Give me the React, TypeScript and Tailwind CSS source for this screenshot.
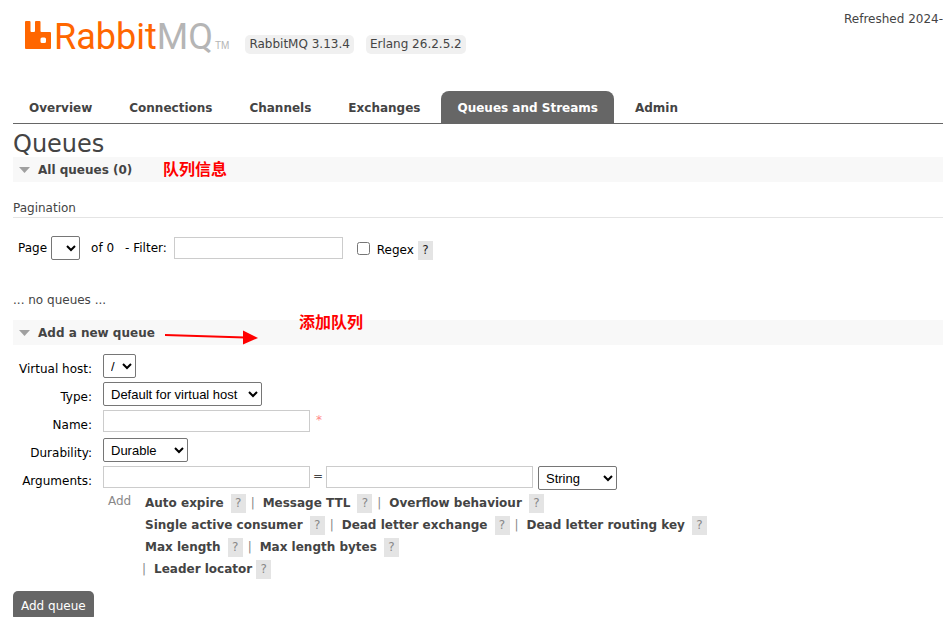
import type { ReactNode } from "react";

const tabs = ["Overview", "Connections", "Channels", "Exchanges", "Queues and Streams", "Admin"];

const argumentRows = [
  ["Auto expire", "Message TTL", "Overflow behaviour"],
  ["Single active consumer", "Dead letter exchange", "Dead letter routing key"],
  ["Max length", "Max length bytes"],
];

const selectStyle =
  "h-6 rounded-[2px] border border-[#767676] bg-white px-[3px] font-['Liberation_Sans',sans-serif] text-[13px] text-black";
const inputStyle = "h-[22px] border border-[#ccc] bg-white px-1";

function Logo() {
  return (
    <a href="#" aria-label="RabbitMQ home" className="flex items-baseline">
      <svg width="27" height="28" viewBox="0 0 27 28" aria-hidden="true">
        <path
          fill="#f60"
          fillRule="evenodd"
          d="M1 0H4.500Q5.500 0 5.500 1V10Q5.500 11 6.500 11H9Q10 11 10 10V1Q10 0 11 0H14.500Q15.500 0 15.500 1V10Q15.500 11 16.500 11H25Q26 11 26 12V27Q26 28 25 28H1Q0 28 0 27V1Q0 0 1 0ZM17 16.500Q15.500 16.500 15.500 18V20.500Q15.500 22 17 22H19.500Q21 22 21 20.500V18Q21 16.500 19.500 16.500Z"
        />
      </svg>
      <span className="ml-[2px] font-['Roboto','Liberation_Sans',sans-serif] text-[36px] leading-[38px] text-[#f60]">
        Rabbit<span className="text-[#b5b5b5]">MQ</span>
      </span>
      <span className="ml-[2px] font-['Liberation_Sans',sans-serif] text-[10px] leading-4 text-[#b5b5b5]">TM</span>
    </a>
  );
}

function SectionBar({ children }: { children: ReactNode }) {
  return (
    <h2 className="bg-[#f8f8f8] font-bold">
      <button type="button" className="flex h-[25px] w-full items-center pl-[6px] text-left">
        <svg width="11" height="6" viewBox="0 0 11 6" className="mr-2" aria-hidden="true">
          <path d="M0 0h11L5.500 6Z" fill="#a0a0a0" />
        </svg>
        {children}
      </button>
    </h2>
  );
}

function Help({ dark = false }: { dark?: boolean }) {
  return (
    <button
      type="button"
      aria-label="Help"
      className={`h-[19px] w-[15px] shrink-0 bg-[#e4e4e4] text-center text-[12px] leading-[19px] ${dark ? "text-[#222]" : "text-[#888]"}`}
    >
      ?
    </button>
  );
}

function FormRow({ id, label, children }: { id: string; label: string; children: ReactNode }) {
  return (
    <div className="flex h-6 items-start">
      <label htmlFor={id} className="mr-[11px] w-[79px] shrink-0 pt-[7px] text-right leading-4 text-black">
        {label}
      </label>
      {children}
    </div>
  );
}

export default function App() {
  return (
    <div className="relative overflow-hidden bg-white font-['DejaVu_Sans',Verdana,sans-serif] text-[12px] leading-4 text-[#444]">
      <header className="flex h-[54px] justify-between pl-[25px]">
        <div className="flex pt-[18px]">
          <Logo />
          <ul className="ml-4 flex gap-3 pt-[17px]">
            <li className="h-[19px] rounded-[5px] bg-[#f0f0f0] px-1 leading-[19px]">RabbitMQ 3.13.4</li>
            <li className="h-[19px] rounded-[5px] bg-[#f0f0f0] px-1 leading-[19px]">Erlang 26.2.5.2</li>
          </ul>
        </div>
        <p className="whitespace-nowrap pt-[11px]">Refreshed 2024-</p>
      </header>

      <main className="pl-[13px]">
        <nav className="mt-[37px] flex gap-[5px] border-b border-[#666] font-bold">
          {tabs.map((tab) => (
            <a
              key={tab}
              href="#"
              className={`h-8 whitespace-nowrap rounded-t-lg px-4 leading-[34px] ${tab === "Queues and Streams" ? "bg-[#666] text-white" : ""}`}
            >
              {tab}
            </a>
          ))}
        </nav>

        <h1 className="pt-[7px] text-[24px] leading-[26px]">Queues</h1>
        <SectionBar>All queues (0)</SectionBar>

        <h3 className="mt-[18px] border-b border-[#e4e4e4] pb-[1px]">Pagination</h3>
        <div className="mt-[18px] flex h-6 items-center pl-[5px] text-black">
          <label htmlFor="page">Page</label>
          <select id="page" className={`${selectStyle} ml-1 w-[29px]`} />
          <span className="ml-[11px]">of 0</span>
          <label htmlFor="filter" className="ml-[11px]">- Filter:</label>
          <input id="filter" type="text" className={`${inputStyle} ml-[7px] w-[169px]`} />
          <input id="regex" type="checkbox" className="ml-[14px] size-[13px]" />
          <label htmlFor="regex" className="ml-[7px] mr-1 pt-1">Regex</label>
          <div className="flex pt-1"><Help dark /></div>
        </div>

        <p className="mb-3 mt-8">... no queues ...</p>
        <SectionBar>Add a new queue</SectionBar>

        <form className="pt-[9px]">
          <div className="grid gap-1">
            <FormRow id="vhost" label="Virtual host:">
              <select id="vhost" className={`${selectStyle} w-[33px]`}>
                <option>/</option>
              </select>
            </FormRow>
            <FormRow id="type" label="Type:">
              <select id="type" className={`${selectStyle} w-[159px]`}>
                <option>Default for virtual host</option>
              </select>
            </FormRow>
            <FormRow id="name" label="Name:">
              <input id="name" type="text" className={`${inputStyle} w-[207px]`} />
              <span className="ml-[6px] pt-[2px] text-[#f88]">*</span>
            </FormRow>
            <FormRow id="durability" label="Durability:">
              <select id="durability" className={`${selectStyle} w-[85px]`}>
                <option>Durable</option>
              </select>
            </FormRow>
            <FormRow id="argument" label="Arguments:">
              <input id="argument" type="text" className={`${inputStyle} w-[207px]`} />
              <span className="w-4 pt-[2px] text-center">=</span>
              <input type="text" aria-label="Argument value" className={`${inputStyle} w-[207px]`} />
              <select aria-label="Argument type" className={`${selectStyle} ml-[5px] w-[79px]`}>
                <option>String</option>
              </select>
            </FormRow>
          </div>
          <div className="mt-[2px] flex pl-[95px] text-[#888]">
            <span className="w-[34px] shrink-0 pt-[1px]">Add</span>
            <div>
              {argumentRows.map((row) => (
                <div key={row[0]} className="flex h-[22px] items-center whitespace-nowrap pl-[3px]">
                  {row.map((name, index) => (
                    <span key={name} className="flex items-center">
                      {index > 0 && <span className="ml-[5px] mr-1 w-2">|</span>}
                      <button type="button" className="mr-[7px] font-bold text-[#444]">{name}</button>
                      <Help />
                    </span>
                  ))}
                </div>
              ))}
              <div className="flex h-[22px] items-center whitespace-nowrap">
                <span className="mr-2">|</span>
                <button type="button" className="mr-1 font-bold text-[#444]">Leader locator</button>
                <Help />
              </div>
            </div>
          </div>
          <button type="submit" className="mt-[11px] h-[30px] rounded-[5px] bg-[#666] px-2 text-white">
            Add queue
          </button>
        </form>
      </main>

      <div className="pointer-events-none font-['Noto_Sans_CJK_SC',sans-serif] text-[16px] font-bold text-[#f00]">
        <span className="absolute left-[163px] top-[160px]">队列信息</span>
        <span className="absolute left-[299px] top-[313px]">添加队列</span>
        <svg width="94" height="16" viewBox="0 0 94 16" className="absolute left-[165px] top-[330px]" aria-hidden="true">
          <path d="M0 5L80 7.500" stroke="#f00" strokeWidth="2" />
          <path d="M78 0.500L93 8L78 14.500Z" fill="#f00" />
        </svg>
      </div>
    </div>
  );
}
